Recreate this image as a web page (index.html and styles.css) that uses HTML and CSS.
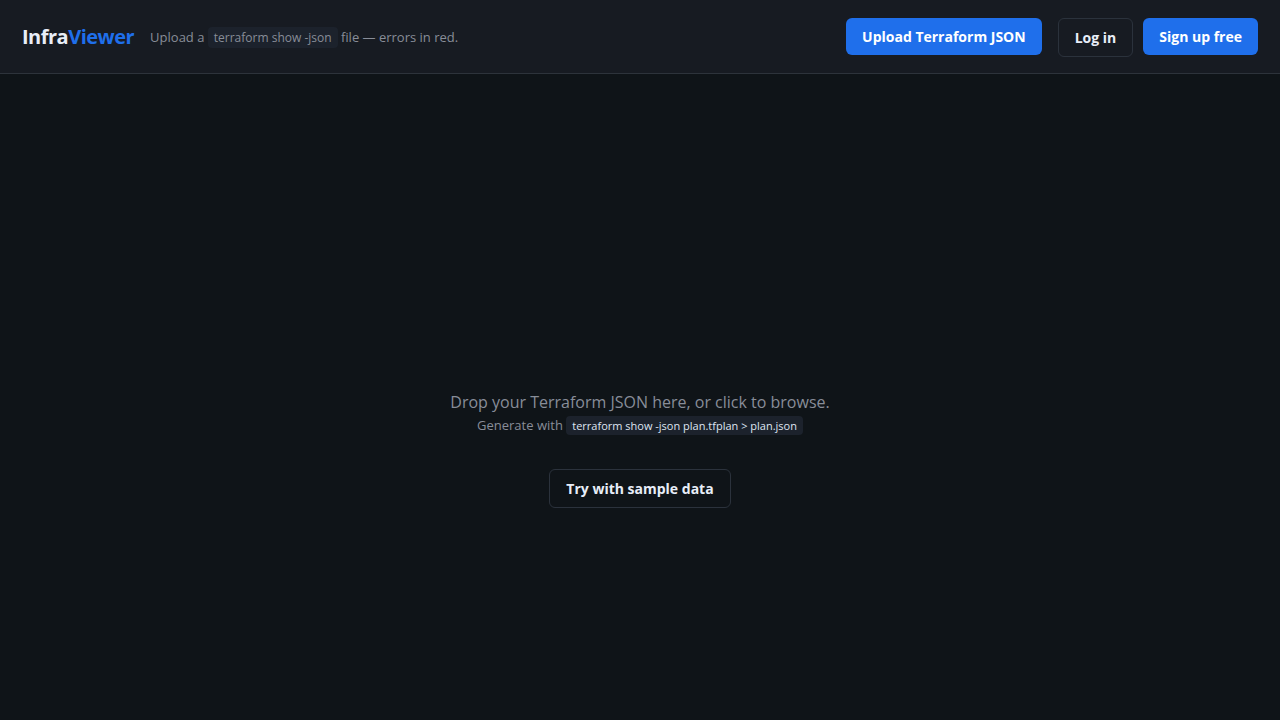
FILE: index.html
```
<!DOCTYPE html>
<html lang="en">
<head>
<meta charset="utf-8">
<meta name="viewport" content="width=device-width, initial-scale=1">
<title>InfraViewer</title>
<link rel="stylesheet" href="styles.css">
</head>
<body>

<header class="topbar">
  <div class="logo">Infra<span>Viewer</span></div>
  <p class="hint">Upload a <code>terraform show -json</code> file — errors in red.</p>
  <div class="actions">
    <button type="button" class="btn btn-primary">Upload Terraform JSON</button>
    <div class="auth">
      <a href="#" class="btn btn-outline">Log in</a>
      <a href="#" class="btn btn-primary">Sign up free</a>
    </div>
  </div>
</header>

<main class="dropzone">
  <p class="drop-title">Drop your Terraform JSON here, or click to browse.</p>
  <p class="drop-sub">Generate with <code>terraform show -json plan.tfplan &gt; plan.json</code></p>
  <button type="button" class="btn btn-outline btn-sample">Try with sample data</button>
</main>

</body>
</html>
```

FILE: styles.css
```
* {
  box-sizing: border-box;
}

body {
  margin: 0;
  min-height: 100vh;
  display: flex;
  flex-direction: column;
  background: #0f1418;
  color: #e8eef8;
  font-family: "Open Sans", sans-serif;
  font-size: 14px;
}

p {
  margin: 0;
}

code {
  padding: 2px 6px;
  border-radius: 4px;
  background: #1c222c;
  font-family: inherit;
}

.topbar {
  display: flex;
  align-items: flex-start;
  gap: 16px;
  padding: 18px 22px 16px;
  background: #171b22;
  border-bottom: 1px solid #2d333b;
}

.logo {
  font-size: 20px;
  font-weight: 700;
  line-height: 37px;
  letter-spacing: -0.5px;
}

.logo span {
  color: #1f6feb;
}

.hint {
  color: #888d98;
  font-size: 13px;
  line-height: 39px;
}

.hint code {
  font-size: 12px;
}

.actions {
  display: flex;
  align-items: flex-start;
  gap: 16px;
  margin-left: auto;
}

.auth {
  display: flex;
  align-items: flex-start;
  gap: 10px;
}

.btn {
  display: inline-block;
  padding: 9px 16px;
  border: 0;
  border-radius: 6px;
  font-family: inherit;
  font-size: 14px;
  font-weight: 700;
  line-height: 19px;
  text-decoration: none;
  cursor: pointer;
}

.btn-primary {
  background: #1f6feb;
  color: #fff;
}

.btn-outline {
  border: 1px solid #2b323c;
  background: transparent;
  color: #e8eef8;
}

.dropzone {
  flex: 1;
  display: flex;
  flex-direction: column;
  align-items: center;
  justify-content: center;
  padding-top: 104px;
  color: #888d98;
}

.drop-title {
  font-size: 16px;
  line-height: 24px;
}

.drop-sub {
  font-size: 13px;
  line-height: 22px;
}

.drop-sub code {
  color: #dfe5f2;
  font-size: 11px;
}

.btn-sample {
  margin-top: 32px;
}
```
